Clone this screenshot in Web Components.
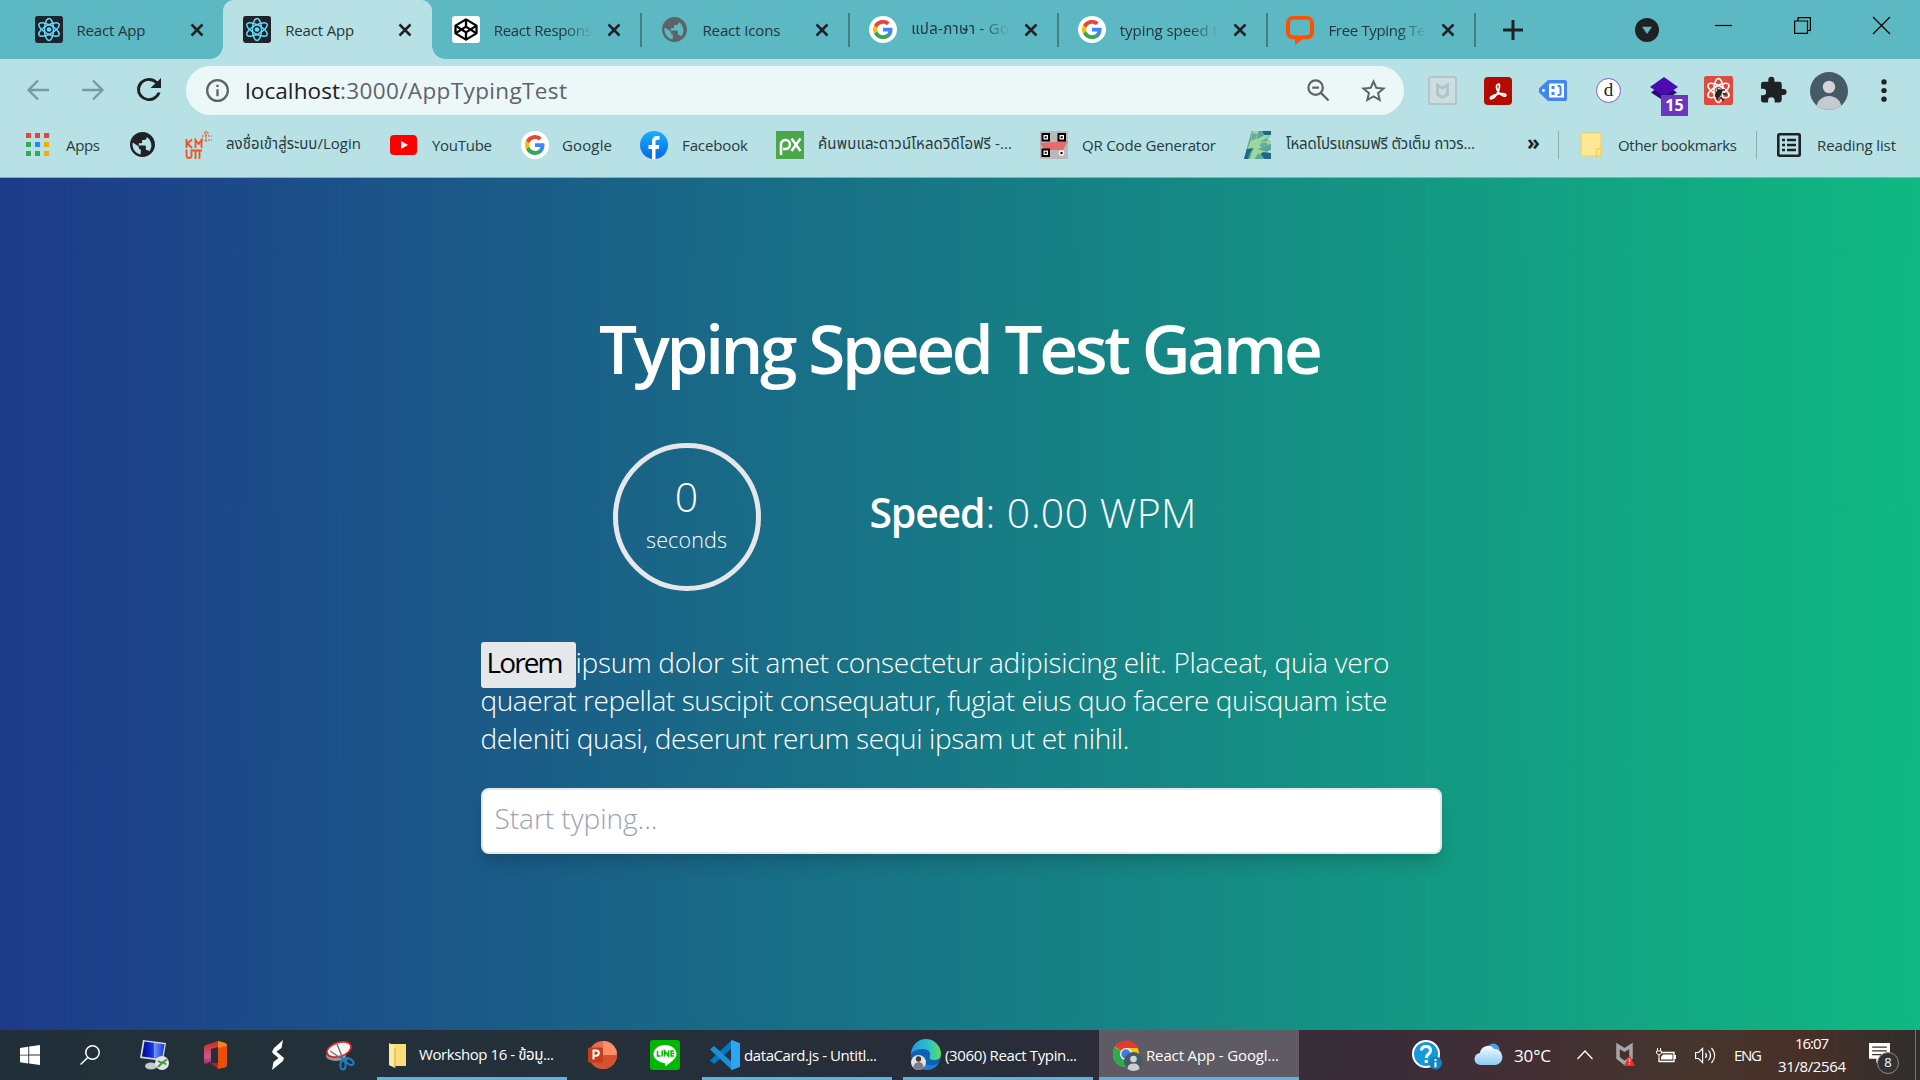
<!DOCTYPE html>
<html lang="th">
<head>
<meta charset="utf-8">
<title>React App</title>
<style>
html,body{margin:0;height:100%;overflow:hidden}
body{font-family:"Open Sans","Noto Sans","Noto Sans Thai",sans-serif;font-size:15px;color:#202124}
</style>
</head>
<body>
<desktop-screen></desktop-screen>
<script>
const G='<circle cx="14" cy="14" r="14" fill="#fff"/><g transform="translate(4 4) scale(.83)"><path fill="#4285f4" d="M23.5 12.3c0-.8-.1-1.6-.2-2.3H12v4.5h6.5a5.500 5.500 0 0 1-2.400 3.600v3h3.900c2.200-2.100 3.500-5.200 3.500-8.800z"/><path fill="#34a853" d="M12 24c3.200 0 6-1.100 8-2.900l-3.900-3c-1.100.7-2.500 1.200-4.100 1.200-3.100 0-5.800-2.100-6.700-5H1.300v3.100A12 12 0 0 0 12 24z"/><path fill="#fbbc05" d="M5.300 14.300a7.200 7.200 0 0 1 0-4.600V6.600h-4a12 12 0 0 0 0 10.800z"/><path fill="#ea4335" d="M12 4.800c1.800 0 3.300.6 4.600 1.800L20 3.200A12 12 0 0 0 1.300 6.600l4 3.100c.9-2.800 3.600-4.900 6.700-4.900z"/></g>';
const GLOBE='<path fill="currentColor" d="M12 2C6.480 2 2 6.480 2 12s4.480 10 10 10 10-4.480 10-10S17.520 2 12 2zM10.500 20c-3.600-.7-6.500-4-6.500-8 0-.6.1-1.200.2-1.700L9 13.500v.8c0 1 .8 1.700 1.700 1.700zm6.900-2.400a1.900 1.900 0 0 0-1.800-1.300h-.9v-2.600c0-.5-.4-.9-.9-.9H9V11h1.800c.5 0 .9-.4.9-.9V8.300h1.800c1 0 1.800-.8 1.800-1.800v-.6a8 8 0 0 1 2.100 11.700z"/>';
const REACT='<g fill="none" stroke="#61dafb" stroke-width="1.500"><ellipse cx="14" cy="14" rx="11.500" ry="4.500" transform="rotate(90 14 14)"/><ellipse cx="14" cy="14" rx="11.500" ry="4.500" transform="rotate(30 14 14)"/><ellipse cx="14" cy="14" rx="11.500" ry="4.500" transform="rotate(150 14 14)"/></g><circle cx="14" cy="14" r="2.300" fill="#61dafb"/>';
const ICONS={
 react:['0 0 28 28','<rect width="28" height="28" rx="2.500" fill="#20232a"/>'+REACT],
 close:['0 0 14 14','<path d="M1.500 1.500l11 11M12.500 1.500l-11 11" stroke="#202124" stroke-width="2.500"/>'],
 codepen:['0 0 28 28','<rect width="28" height="28" rx="3" fill="#fff"/><g fill="none" stroke="#000" stroke-width="2.300" stroke-linejoin="round"><path d="M14 3.500l10.500 6.500v8L14 24.500 3.500 18v-8z"/><path d="M3.500 10L14 17l10.500-7M3.500 18L14 11l10.500 7M14 3.500V11M14 17v7.500"/></g>'],
 globe:['2 2 20 20',GLOBE],
 google:['0 0 28 28',G],
 chat:['0 0 28 28','<path d="M7 2h14a5 5 0 0 1 5 5v11a5 5 0 0 1-5 4h-5l-5 4v-4H7a5 5 0 0 1-5-4V7a5 5 0 0 1 5-5z" fill="none" stroke="#ff5100" stroke-width="4"/>'],
 plus:['0 0 20 20','<path d="M10 0v20M0 10h20" stroke="#202124" stroke-width="3"/>'],
 drop:['0 0 24 24','<circle cx="12" cy="12" r="12" fill="#202124"/><path d="M7 8.800h10L12 16z" fill="#5cb8c2"/>'],
 min:['0 0 17 17','<path d="M0 8.500h17" stroke="#000" stroke-width="1.200"/>'],
 restore:['0 0 17 17','<path d="M.6 4h12.900v12.400H.6zM4 4V.6h12.400v12.900h-3" fill="none" stroke="#000" stroke-width="1.200"/>'],
 wclose:['0 0 17 17','<path d="M0 0l17 17M17 0L0 17" stroke="#000" stroke-width="1.200"/>'],
 back:['0 0 22 22','<path d="M22 11H2M11 1.500L1.500 11l9.500 9.500" fill="none" stroke="#789a9f" stroke-width="2.300"/>'],
 fwd:['0 0 22 22','<path d="M0 11h20M11 1.500l9.500 9.500-9.500 9.500" fill="none" stroke="#789a9f" stroke-width="2.300"/>'],
 reload:['4 4 16 16','<path fill="#202124" d="M17.650 6.350A7.960 7.960 0 0 0 12 4a8 8 0 1 0 7.730 10h-2.080A6 6 0 1 1 12 6c1.660 0 3.140.69 4.220 1.780L13 11h7V4z"/>'],
 info:['2 2 20 20','<path fill="#5f6368" d="M11 17h2v-6h-2zm1-15a10 10 0 1 0 0 20 10 10 0 0 0 0-20zm0 18a8 8 0 1 1 0-16 8 8 0 0 1 0 16zM11 9h2V7h-2z"/>'],
 zoomout:['0 0 24 24','<g fill="none" stroke="#5f6368" stroke-width="2.300"><circle cx="9" cy="9" r="7.500"/><path d="M14.500 14.500l8 8M5.500 9h7"/></g>'],
 star:['2 2 20 19','<path fill="#5f6368" d="M22 9.240l-7.190-.62L12 2 9.190 8.630 2 9.240l5.460 4.730L5.820 21 12 17.270 18.180 21l-1.630-7.030zM12 15.400l-3.760 2.270 1-4.280-3.320-2.880 4.380-.38L12 6.100l1.710 4.040 4.380.38-3.320 2.880 1 4.280z"/>'],
 mcafee:['0 0 29 29','<rect x="1" y="1" width="27" height="27" rx="2" fill="#cbdfe2" stroke="#b2c4c8" stroke-width="2"/><path d="M9.500 9l5 3 5-3v9.500l-5 3-5-3z" fill="none" stroke="#b2c4c8" stroke-width="3"/>'],
 acro:['0 0 28 28','<rect width="28" height="28" rx="4" fill="#b30b00"/><path d="M14 7.200c2.500-1.200 1.700 5.600-1.400 10.300-2.500 4-6.800 5.600-6.200 3.400.7-2.300 8.300-4.400 12-4.200 4.800.5 4.200 3.200.9 2.300-3.100-1-6.900-5.700-6.900-9.300 0-1.400.9-2.200 1.600-2.500z" fill="none" stroke="#fff" stroke-width="1.700"/>'],
 tag:['0 0 28 21','<path d="M9 0h17a2 2 0 0 1 2 2v17a2 2 0 0 1-2 2H9L0 12.500v-4z" fill="#4285f4"/><path d="M10 3.500h15v14H10z" fill="#fff"/><circle cx="4.500" cy="10.500" r="1.400" fill="#fff"/><path d="M12.500 6h3v3h-3zM12.500 12h3v3h-3z" fill="#4285f4"/><path d="M18.500 6h1.500q1.500 0 1.500 1.500v6q0 1.500-1.500 1.500h-1.500" fill="none" stroke="#4285f4" stroke-width="2"/>'],
 layers:['0 0 28 26','<path d="M14 7l13 9-13 9-13-9 4-3z" fill="#2b0a78"/><path d="M14 0l14 10.500L14 20 0 10.500z" fill="#4a0cb0"/>'],
 rdev:['0 0 28 28','<rect width="28" height="28" rx="2" fill="#de4b3c"/>'+REACT.replace(/#61dafb/g,'#fff')+'<g fill="#222" stroke="#222"><ellipse cx="14" cy="17" rx="2.300" ry="4" transform="rotate(30 14 17)"/><path d="M13 12l1 3M17 14l3-1M18 17l4 1M16 20l3 4M12 18l1 5" stroke-width="1.500"/></g>'],
 puzzle:['2 2 20.500 20.500','<path fill="#202124" d="M20.500 11H19V7a2 2 0 0 0-2-2h-4V3.500a2.500 2.500 0 0 0-5 0V5H4a2 2 0 0 0-2 2v3.800h1.500a2.700 2.700 0 0 1 0 5.400H2V20c0 1.100.9 2 2 2h3.800v-1.500a2.700 2.700 0 0 1 5.400 0V22H17a2 2 0 0 0 2-2v-4h1.500a2.500 2.500 0 0 0 0-5z"/>'],
 avatar:['0 0 38 38','<defs><clipPath id="a"><circle cx="19" cy="19" r="19"/></clipPath></defs><g clip-path="url(#a)"><rect width="38" height="38" fill="#455a64"/><circle cx="19" cy="15" r="6.200" fill="#cfd4d9"/><ellipse cx="19" cy="36" rx="12.500" ry="12" fill="#c4cad0"/></g>'],
 dots:['0 0 6 24','<g fill="#202124"><circle cx="3" cy="3" r="2.700"/><circle cx="3" cy="12" r="2.700"/><circle cx="3" cy="21" r="2.700"/></g>'],
 apps:['0 0 23 23','<g><path fill="#ea4335" d="M0 0h5v5H0zM9 0h5v5H9zM18 0h5v5h-5z"/><path fill="#34a853" d="M0 9h5v5H0zM0 18h5v5H0zM9 18h5v5H9z"/><path fill="#1a8cff" d="M9 9h5v5H9z"/><path fill="#f9ab00" d="M18 9h5v5h-5zM18 18h5v5h-5z"/></g>'],
 kmutt:['0 0 27 28','<g fill="none" stroke="#f4511e" stroke-width="1.800"><path d="M1.500 8v9M7 8.500L2.500 12.500 7 17M10.500 17V9l3 4 3-4v8M1.500 18.500v6q0 2.500 2.500 2.500t2.500-2.500v-5h10.500M10.500 20v8M14.500 20v8"/></g><path d="M21 0v12M17 5h10M19 2h6M17 9h10" stroke="#f4511e" stroke-width="1.400" stroke-dasharray="1.400 1.700"/>'],
 yt:['0 0 27 20','<rect width="27" height="20" rx="4" fill="#f00"/><path d="M11 6l7 4-7 4z" fill="#fff"/>'],
 fb:['0 0 28 28','<defs><linearGradient id="f" x2="0" y2="1"><stop stop-color="#19afff"/><stop offset="1" stop-color="#0866e8"/></linearGradient></defs><circle cx="14" cy="14" r="14" fill="url(#f)"/><path d="M12 28V18H8.500v-4H12v-3.500C12 7 14 5 17.300 5c1 0 2.200.2 2.200.2v3.500h-1.800c-1.700 0-2.200 1-2.200 2.200V14h3.900l-.7 4h-3.200v10z" fill="#fff"/>'],
 px:['0 0 28 28','<rect width="28" height="28" fill="#4ba84a"/><g fill="none" stroke="#fff" stroke-width="2.500"><path d="M5 24V12.500A4.500 4.500 0 1 1 9.500 18H7M15.500 7.500L24.500 20M24.500 7.500L15.500 20"/></g>'],
 qr:['0 0 28 28','<rect width="28" height="28" fill="#b9b9b9"/><path d="M0 12l28-2-5 9H5z" fill="#f05a58" opacity=".8"/><g fill="#fff" stroke="#000" stroke-width="2"><rect x="2.500" y="3" width="6.500" height="6.500"/><rect x="18.500" y="3" width="6.500" height="6.500"/><rect x="2.500" y="18.500" width="6.500" height="6.500"/></g><path d="M4.700 5.200h2v2h-2zM20.700 5.200h2v2h-2zM4.700 20.700h2v2h-2z"/><circle cx="21.500" cy="22" r="2" stroke="#fff" stroke-width="1.500"/>'],
 pic:['0 0 28 28','<path d="M8 0h20v5l-4 3 4 3v8l-5 2 5 2v5H0l3-11z" fill="#5aa79a"/><path d="M9 0h6l-2 8 7-3 2-5h6v5L16 11l12-2v4l-14 5 10 3 3 7h-6l-6-6-4 6H6l3-9-6 1 3-8z" fill="#9cd7a0"/><path d="M19 0h9v4h-7zM3 18l7-1-4 5-2 6H0zM20 21l8 1v6h-7l-4-5z" fill="#1d6a88"/><path d="M9 2l5 1-2 5-5 2zM16 13l6-2 4 3-7 4z" fill="#66af9c"/>'],
 folder:['0 0 22 26','<path d="M1 0h18q2 0 2 2v23H1q-1 0-1-1V1q0-1 1-1z" fill="#ffe794" stroke="#f5cf57"/><path d="M17 17h4v8h-5v-6z" fill="#ffe794" stroke="#f5c842"/>'],
 reading:['0 0 24 24','<rect x="1.300" y="1.300" width="21.400" height="21.400" rx="1" fill="none" stroke="#202124" stroke-width="2.600"/><path d="M5 7h3M5 12h3M5 17h3M10 7h9M10 12h9M10 17h9" stroke="#202124" stroke-width="2.400"/>'],
 win:['0 0 20 20','<path fill="#fff" d="M0 3l8.300-1.300v8H0zM9.200 1.500L20 0v9.600H9.200zM0 10.600h8.300v7.900L0 17.200zM9.200 10.600H20V20L9.200 18.600z"/>'],
 search:['0 0 20 20','<g fill="none" stroke="#fff" stroke-width="1.500"><circle cx="12.500" cy="7.500" r="6.700"/><path d="M7.800 12.500L.6 19.500"/></g>'],
 pc:['0 0 29 30','<defs><linearGradient id="p"><stop stop-color="#00068f"/><stop offset=".5" stop-color="#1738e8"/><stop offset=".55" stop-color="#6f93f5"/><stop offset="1" stop-color="#1a35d8"/></linearGradient></defs><ellipse cx="11" cy="26" rx="6" ry="3.500" fill="#c9c9c9"/><path d="M3 0l23 3-3 18L0 18z" fill="#d5d9de"/><path d="M4.500 1.500l20 2.800-2.500 15L2 16.600z" fill="url(#p)"/><circle cx="22" cy="23" r="7" fill="#e4e4e4"/><path d="M18 21l4 2-4 4M27 19.500l-4 2.500 3 2.500" fill="none" stroke="#3a9b3a" stroke-width="1.900"/>'],
 office:['0 0 23 28','<defs><linearGradient id="o" x2="0" y2="1"><stop stop-color="#d12a1c"/><stop offset=".7" stop-color="#c25b8e"/><stop offset="1" stop-color="#b02050"/></linearGradient></defs><path d="M14 0v6L7 8v13L1 23q-1 0-1-2V7q0-2 2-3z" fill="url(#o)"/><path d="M14 0l7 2q2 .6 2 3v19q0 2-2 2.500L14 28z" fill="#e8500a"/><path d="M14 0l7 2q2 .6 2 3l-9 2z" fill="#f58220"/><path d="M6 22h8v6z" fill="#c4152e"/>'],
 ess:['0 0 13 30','<path d="M12 0l-1.500 8L5 12l7 6-1 3-10-9 2-4zM1 30l1.500-8 5-4-6-5 2-3 9.500 8-1 3z" fill="#fff"/>'],
 snip:['0 0 28 29','<ellipse cx="10" cy="15" rx="10" ry="5" fill="#9a9a9a"/><ellipse cx="13" cy="8.500" rx="12.500" ry="7" fill="#f5f5f5" stroke="#d8262c" stroke-width="1.700" transform="rotate(-18 13 8.500)"/><path d="M11 3l6 15M4 10l12 8" stroke="#777" stroke-width="1.500"/><g fill="none" stroke="#1b81c0" stroke-width="2"><ellipse cx="17" cy="24" rx="2.600" ry="4.500"/><ellipse cx="23.500" cy="20.500" rx="4.500" ry="2.600" transform="rotate(35 23.500 20.500)"/><path d="M15 15l3 5 4-2"/></g>'],
 wfolder:['0 0 18 25','<path d="M1 1h16v22H1z" fill="#fbdc78"/><path d="M0 0l6 3v22l-6-3z" fill="#ffe9a2"/><path d="M6 5v20" stroke="#d8a93b"/>'],
 ppt:['0 0 29 28','<circle cx="15" cy="14" r="14" fill="#ed6c47"/><path d="M15 0a14 14 0 0 1 14 14H15z" fill="#ff8f6b"/><path d="M1 14h28a14 14 0 0 1-28 0z" fill="#d35230"/><rect y="6.500" width="15" height="15" rx="1.500" fill="#c43e1c"/><path d="M5.500 18.500v-9h2.700a2.600 2.600 0 0 1 0 5.200H5.500" fill="none" stroke="#fff" stroke-width="2"/>'],
 line:['0 0 30 30','<rect width="30" height="30" rx="3" fill="#00b900"/><path d="M15 5c6.500 0 11.500 4 11.500 9 0 4.500-6 8.500-11.500 12.500.6-2.500.3-3.500-1-3.600C8 22 3.500 18.500 3.500 14c0-5 5-9 11.500-9z" fill="#fff"/><path d="M7.500 11v5h3M12.200 10.500v6M14.500 16.500V11l4 5v-5.500M24 11h-3v5h3M21 13.500h3" fill="none" stroke="#00b900" stroke-width="1.500"/>'],
 vscode:['0 0 30 30','<path d="M22 0v8L4 24l-4-3.500z" fill="#0078c5"/><path d="M0 9.500L4 6l18 16v8z" fill="#1b8fd8"/><path d="M22 0l8 3.300v23.400L22 30l-1-1V1z" fill="#29a7f2"/>'],
 edge:['0 0 30 30','<defs><linearGradient id="e"><stop stop-color="#1f9be0"/><stop offset=".6" stop-color="#2cc3c9"/><stop offset="1" stop-color="#61dc54"/></linearGradient></defs><circle cx="15" cy="15" r="15" fill="#0d62b4"/><path d="M0 14A15 15 0 0 1 30 14q0 6-7 6-6 0-4-4 1-7-7-7Q3 9 0 14z" fill="url(#e)"/><path d="M11 14q-3 8 5 11 6 2 12-2l2-3v9H12z" fill="#262d3b"/><path d="M11 15q-2 8 6 10 5 1 11-2-5 8-14 7-8-3-3-15z" fill="#1b7fca"/><circle cx="7.500" cy="22.500" r="7.500" fill="#dfe3e6"/><circle cx="7.500" cy="19" r="2.700" fill="#49382f"/><path d="M2 28q1-6 6-6 4 0 5 6-5 4-11 0z" fill="#7b7e86"/>'],
 chrome:['0 0 30 31','<circle cx="13" cy="14" r="13" fill="#fbc116"/><path d="M13 14L2 7A13 13 0 0 1 25 8H13z" fill="#e33b2e"/><path d="M13 14L1.700 7.500A13 13 0 0 0 12 27l6-10z" fill="#2da94f"/><circle cx="13" cy="14" r="6" fill="#fff"/><circle cx="13" cy="14" r="4.700" fill="#3e7de8"/><circle cx="20.500" cy="21.500" r="9.500" fill="#455a64"/><circle cx="20.500" cy="19" r="3.300" fill="#d0d5d9"/><path d="M14.500 29q0-5.500 6-5.500t6 5.500q-6 4-12 0z" fill="#c9ced3"/>'],
 help:['0 0 30 31','<circle cx="14" cy="14" r="13" fill="#129bd8" stroke="#fff" stroke-width="2"/><path d="M9.500 10.500q0-4 4.500-4t4.500 4q0 2-2 3.500t-2.300 4M14.200 20v3" fill="none" stroke="#fff" stroke-width="3"/><circle cx="23.500" cy="23" r="6.500" fill="#0f86c4"/><path d="M23.500 19v2M23.500 22.300v5" stroke="#fff" stroke-width="2"/>'],
 cloud:['0 0 27 22','<defs><linearGradient id="c" x2="0" y2="1"><stop stop-color="#f4fbff"/><stop offset="1" stop-color="#8ccbf3"/></linearGradient></defs><circle cx="19" cy="7" r="6.500" fill="#4c9fe0"/><path d="M6 22a6 6 0 0 1-1-12A8.500 8.500 0 0 1 20 6a8 8 0 0 1 1 16z" fill="url(#c)"/>'],
 up:['0 0 16 10','<path d="M.5 9L8 1l7.500 8" fill="none" stroke="#fff" stroke-width="1.300"/>'],
 mc2:['0 0 19 22','<path d="M2 2l6.500 4L15 2v12l-6.500 5L2 14z" fill="none" stroke="#a6a6a8" stroke-width="3.500"/><path d="M13.500 11l5.500 11H8z" fill="#ef2b2d"/><path d="M13.500 14.500v3.500M13.500 19v1.500" stroke="#fff" stroke-width="1.300"/>'],
 batt:['0 0 20 15','<path d="M6 4.500h12v9H3V10" fill="none" stroke="#fff" stroke-width="1.300"/><path d="M7 6.500h9.500v5H5V9zM18 7h2v4h-2z" fill="#fff"/><path d="M1.500 0v3M4.500 0v3M.5 3h5v2l-2 2h-1l-2-2zM3 6v4" stroke="#fff" fill="none"/>'],
 vol:['0 0 21 17','<path d="M.6 5.500h3l4-4v14l-4-4h-3z" fill="none" stroke="#fff" stroke-width="1.200"/><path d="M10.500 6q2 2.500 0 5M13.500 3.500q4 5 0 10M16.500 1q6.500 7.500 0 15" fill="none" stroke="#fff" stroke-width="1.200"/>'],
 note:['0 0 20 19','<path d="M0 0h20v15h-9l-4 4v-4H0z" fill="#fff"/><path d="M3 4h14M3 7.500h14M3 11h9" stroke="#3d302c" stroke-width="1.200"/>']
};
const define=(name,html,setup)=>customElements.define(name,class extends HTMLElement{
  connectedCallback(){
    if(this.shadowRoot)return;
    const t=document.createElement('template');
    t.innerHTML=typeof html==='function'?html(this):html;
    this.attachShadow({mode:'open'}).append(document.importNode(t.content,true));
    if(setup)setup(this);
  }
});

/* One line of text, tracked so that it is exactly w pixels wide. */
define('fit-text','<style>:host{display:inline-block;flex:none;white-space:pre}</style><span><slot></slot></span>',el=>{
  const w=+el.getAttribute('w'),s=el.shadowRoot.querySelector('span');
  if(!w)return;
  el.style.width=w+'px';
  const a=s.getBoundingClientRect().width;
  s.style.letterSpacing='1px';
  const gaps=s.getBoundingClientRect().width-a-1;
  s.style.letterSpacing=gaps>.5?((w-a)/gaps).toFixed(3)+'px':'0';
});

define('app-icon',el=>{
  const [box,art]=ICONS[el.getAttribute('name')];
  return `<style>:host{display:block;flex:none;width:${el.getAttribute('w')}px;height:${el.getAttribute('h')}px}svg{display:block;width:100%;height:100%;overflow:visible}</style><svg viewBox="${box}" preserveAspectRatio="none">${art}</svg>`;
});

define('browser-tab',el=>{
  const g=el.getAttribute('icon')==='globe';
  return `<style>
  :host{display:flex;align-items:center;box-sizing:border-box;width:208.67px;height:59px;flex:none;padding-left:20px;position:relative;color:#23363a}
  :host([active]){background:#b7e1e4;border-radius:11px 11px 0 0}
  :host([active])::before,:host([active])::after{content:"";position:absolute;bottom:0;width:13px;height:13px}
  :host([active])::before{left:-13px;background:radial-gradient(circle at 0 0,transparent 12.500px,#b7e1e4 13px)}
  :host([active])::after{right:-13px;background:radial-gradient(circle at 100% 0,transparent 12.500px,#b7e1e4 13px)}
  .sep{width:2px;height:34px;background:#447f86;margin-left:25px;flex:none}
  .t{width:99px;margin-left:14px;overflow:hidden;flex:none}
  .fade{-webkit-mask-image:linear-gradient(90deg,#000 70%,transparent);mask-image:linear-gradient(90deg,#000 70%,transparent)}
  .i{width:28px;flex:none;color:#5f6368;display:flex;justify-content:center}
  .x{margin-left:14px}
  </style><div class="i"><app-icon name="${el.getAttribute('icon')}" w="${g?25:28}" h="${g?25:27}"></app-icon></div><div class="t ${el.hasAttribute('fade')?'fade':''}"><fit-text w="${el.getAttribute('w')}">${el.getAttribute('label')}</fit-text></div><app-icon class="x" name="close" w="14" h="14"></app-icon>${el.hasAttribute('sep')?'<div class="sep" style="margin-left:19px"></div>':''}`;
});

define('tab-strip',`<style>
:host{display:flex;height:59px;background:#5cb8c2;padding-left:14.500px;align-items:center}
.plus{margin-left:28px}.drop{margin-left:112px}.win{margin-top:-8px}
</style>
<browser-tab icon="react" label="React App" w="69"></browser-tab>
<browser-tab active icon="react" label="React App" w="69"></browser-tab>
<browser-tab sep fade icon="codepen" label="React Respons" w="98"></browser-tab>
<browser-tab sep icon="globe" label="React Icons" w="78"></browser-tab>
<browser-tab sep fade icon="google" label="แปล-ภาษา - Go" w="98"></browser-tab>
<browser-tab sep fade icon="google" label="typing speed t" w="98"></browser-tab>
<browser-tab sep fade icon="chat" label="Free Typing Te" w="97"></browser-tab>
<app-icon class="plus" name="plus" w="20" h="20"></app-icon>
<app-icon class="drop" name="drop" w="24" h="24"></app-icon>
<app-icon class="win" style="margin-left:56px" name="min" w="17" h="17"></app-icon>
<app-icon class="win" style="margin-left:62px" name="restore" w="17" h="17"></app-icon>
<app-icon class="win" style="margin-left:62px" name="wclose" w="17" h="17"></app-icon>`);

define('tool-bar',`<style>
:host{display:flex;height:63px;background:#b7e1e4;align-items:center;box-sizing:border-box;padding-left:27px}
.nav{margin-top:-2px}
.omni{display:flex;align-items:center;box-sizing:border-box;width:1218px;height:49px;border-radius:25px;background:#ecf8f8;margin-left:25px;padding:0 18px 0 20px;font-size:22.500px}
.host{color:#202124;margin-left:16px}.path{color:#5f6368}
.badge{position:absolute;left:11px;top:18px;width:27px;height:21px;background:#6b37bf;color:#fff;font:700 16px/21px "Open Sans",sans-serif;text-align:center}
.d{box-sizing:border-box;width:25px;height:25px;border-radius:50%;background:#fff;border:1px solid #7c5cc4;font:19px/21px "Liberation Serif",serif;text-align:center;margin-left:29px}
.lay{position:relative;margin-left:29px;margin-top:-2px}
</style>
<app-icon class="nav" name="back" w="22" h="22"></app-icon>
<app-icon class="nav" name="fwd" w="22" h="22" style="margin-left:33px"></app-icon>
<app-icon class="nav" name="reload" w="24" h="23" style="margin-left:33px"></app-icon>
<div class="omni"><app-icon name="info" w="23" h="23"></app-icon><fit-text class="host" w="95">localhost</fit-text><fit-text class="path" w="227">:3000/AppTypingTest</fit-text><div style="flex:1"></div><app-icon name="zoomout" w="23" h="23"></app-icon><app-icon name="star" w="25" h="23" style="margin-left:31px"></app-icon></div>
<app-icon name="mcafee" w="29" h="29" style="margin-left:24px"></app-icon>
<app-icon name="acro" w="28" h="28" style="margin-left:27px"></app-icon>
<app-icon name="tag" w="28" h="21" style="margin-left:27px"></app-icon>
<div class="d">d</div>
<div class="lay"><app-icon name="layers" w="28" h="25"></app-icon><div class="badge">15</div></div>
<app-icon name="rdev" w="29" h="29" style="margin-left:26px"></app-icon>
<app-icon name="puzzle" w="25" h="25" style="margin-left:28px"></app-icon>
<app-icon name="avatar" w="38" h="38" style="margin-left:24px"></app-icon>
<app-icon name="dots" w="6" h="23" style="margin-left:33px"></app-icon>`);

define('bookmark-bar',`<style>
:host{display:flex;height:56px;box-sizing:border-box;padding:0 0 10px 26px;background:#b7e1e4;border-bottom:1px solid #86aeb0;align-items:center;color:#263b40}
.r{width:1px;height:28px;background:#8cadb0}
</style>
<app-icon name="apps" w="23" h="23"></app-icon><fit-text w="34" style="margin-left:17px">Apps</fit-text>
<app-icon name="globe" w="25" h="25" style="margin-left:30px;color:#202124"></app-icon>
<app-icon name="kmutt" w="27" h="28" style="margin-left:30px"></app-icon><fit-text w="135" style="margin-left:14px">ลงชื่อเข้าสู่ระบบ/Login</fit-text>
<app-icon name="yt" w="27" h="20" style="margin-left:29px"></app-icon><fit-text w="60" style="margin-left:15px">YouTube</fit-text>
<app-icon name="google" w="28" h="28" style="margin-left:29px"></app-icon><fit-text w="50" style="margin-left:13px">Google</fit-text>
<app-icon name="fb" w="28" h="28" style="margin-left:28px"></app-icon><fit-text w="66" style="margin-left:14px">Facebook</fit-text>
<app-icon name="px" w="28" h="28" style="margin-left:28px"></app-icon><fit-text w="194" style="margin-left:14px">ค้นพบและดาวน์โหลดวิดีโอฟรี -...</fit-text>
<app-icon name="qr" w="28" h="28" style="margin-left:28px"></app-icon><fit-text w="134" style="margin-left:14px">QR Code Generator</fit-text>
<app-icon name="pic" w="27" h="28" style="margin-left:28px"></app-icon><fit-text w="189" style="margin-left:15px">โหลดโปรแกรมฟรี ตัวเต็ม ถาวร...</fit-text>
<fit-text w="12" style="margin:-5px 0 0 52px;font-size:21px;font-weight:700;color:#202124">»</fit-text>
<div class="r" style="margin-left:19px"></div>
<app-icon name="folder" w="21" h="24" style="margin-left:22px"></app-icon><fit-text w="119" style="margin-left:16px">Other bookmarks</fit-text>
<div class="r" style="margin-left:19px"></div>
<app-icon name="reading" w="24" h="24" style="margin-left:20px"></app-icon><fit-text w="79" style="margin-left:16px">Reading list</fit-text>`);

define('timer-ring',`<style>
:host{display:flex;flex-direction:column;align-items:center;box-sizing:border-box;width:148px;height:148px;border:5px solid #e5e7eb;border-radius:50%;padding-top:20px}
.n{font-size:41px;line-height:56px}.s{font-size:21.500px;line-height:31px}
</style><div class="n"><slot></slot></div><fit-text class="s" w="81">seconds</fit-text>`);

define('typing-game',`<style>
:host{display:flex;flex-direction:column;align-items:center;box-sizing:border-box;height:852px;padding:124px 0 0 2px;background:linear-gradient(90deg,#1e3a8a,#10b981);color:#fff;font-weight:300}
.title{font-size:67.500px;line-height:93px;font-weight:600}
.stats{display:flex;width:961px;margin-top:48px;height:148px;padding-left:132px;box-sizing:border-box}
.speed{display:flex;margin:41px 0 0 109px;font-size:41px;line-height:56px}
.speed b{font-weight:600}
.text{display:flex;flex-direction:column;width:961px;margin-top:52px;font-size:28px;line-height:38px}
.row{display:flex}
mark{box-sizing:border-box;width:95px;height:46px;margin:-1px 0 -7px;padding:1px 0 0 6px;border-radius:3px;background:#e5e7eb;color:#000;font-weight:400}
.input{box-sizing:border-box;width:961px;height:66px;margin-top:31px;border:2px solid #e5e7eb;border-radius:8px;background:#fff;color:#9ca3af;padding:9px 12px;font-size:28px;line-height:38px;box-shadow:0 12px 18px -3px rgba(0,0,0,.14),0 5px 7px -2px rgba(0,0,0,.06)}
</style>
<fit-text class="title" w="724">Typing Speed Test Game</fit-text>
<div class="stats"><timer-ring>0</timer-ring><div class="speed"><b><fit-text w="116">Speed</fit-text></b><fit-text w="211">: 0.00 WPM</fit-text></div></div>
<div class="text"><div class="row"><mark><fit-text w="77">Lorem</fit-text></mark><fit-text w="814">ipsum dolor sit amet consectetur adipisicing elit. Placeat, quia vero</fit-text></div>
<div class="row"><fit-text w="907">quaerat repellat suscipit consequatur, fugiat eius quo facere quisquam iste</fit-text></div>
<div class="row"><fit-text w="649">deleniti quasi, deserunt rerum sequi ipsam ut et nihil.</fit-text></div></div>
<div class="input"><fit-text w="163">Start typing...</fit-text></div>`);

define('task-button',`<style>
:host{display:flex;align-items:center;box-sizing:border-box;height:50px;flex:none;border-bottom:3px solid #63b0da;padding-top:3px}
:host([active]){background:#5e5b65}
</style><slot></slot>`);

define('task-bar',`<style>
:host{display:flex;height:50px;align-items:center;color:#fff;font-size:15px;padding-left:20px;background:linear-gradient(90deg,#213038 0,#24303a 30%,#282d3a 52%,#3a2d38 72%,#432f33 80%,#45352c 88%,#483028 94%,#302e2c 100%)}
.clock{display:flex;flex-direction:column;align-items:center;width:70px;margin-left:15px;line-height:23px}
.note{position:relative;margin-left:22px;margin-top:-4px}
.b{position:absolute;left:8px;top:9px;box-sizing:border-box;width:22px;height:22px;border-radius:50%;background:#333;border:1.500px solid #8b8b8b;text-align:center;font-size:13px;line-height:19px}
.end{margin-left:25px;width:1px;height:50px;background:#7b7472}
</style>
<app-icon name="win" w="20" h="20"></app-icon>
<app-icon name="search" w="20" h="20" style="margin-left:40px"></app-icon>
<app-icon name="pc" w="29" h="30" style="margin-left:40px"></app-icon>
<app-icon name="office" w="23" h="28" style="margin-left:35px"></app-icon>
<app-icon name="ess" w="13" h="30" style="margin-left:44px"></app-icon>
<app-icon name="snip" w="28" h="29" style="margin-left:42px"></app-icon>
<task-button style="margin-left:23px;width:190px"><app-icon name="wfolder" w="18" h="25" style="margin-left:12px"></app-icon><fit-text w="135" style="margin-left:12px">Workshop 16 - ข้อมู...</fit-text></task-button>
<app-icon name="ppt" w="29" h="28" style="margin-left:21px"></app-icon>
<app-icon name="line" w="30" h="30" style="margin-left:33px"></app-icon>
<task-button style="margin-left:22px;width:190px"><app-icon name="vscode" w="30" h="30" style="margin-left:8px"></app-icon><fit-text w="133" style="margin-left:4px">dataCard.js - Untitl...</fit-text></task-button>
<task-button style="margin-left:11px;width:190px"><app-icon name="edge" w="30" h="30" style="margin-left:8px"></app-icon><fit-text w="132" style="margin-left:4px">(3060) React Typin...</fit-text></task-button>
<task-button active style="margin-left:6px;width:200px"><app-icon name="chrome" w="30" h="31" style="margin-left:14px"></app-icon><fit-text w="133" style="margin-left:3px">React App - Googl...</fit-text></task-button>
<app-icon name="help" w="30" h="31" style="margin-left:113px"></app-icon>
<app-icon name="cloud" w="26" h="22" style="margin:-3px 0 0 33px"></app-icon>
<fit-text w="37" style="margin-left:13px;font-size:17px">30°C</fit-text>
<app-icon name="up" w="16" h="10" style="margin-left:26px"></app-icon>
<app-icon name="mc2" w="19" h="22" style="margin-left:23px"></app-icon>
<app-icon name="batt" w="20" h="15" style="margin-left:21px"></app-icon>
<app-icon name="vol" w="21" h="17" style="margin-left:19px"></app-icon>
<fit-text w="28" style="margin-left:18px">ENG</fit-text>
<div class="clock"><fit-text w="34">16:07</fit-text><fit-text w="68">31/8/2564</fit-text></div>
<div class="note"><app-icon name="note" w="21" h="20"></app-icon><div class="b">8</div></div>
<div class="end"></div>`);

define('desktop-screen',`<style>:host{display:flex;flex-direction:column;width:1920px;height:1080px;overflow:hidden}</style>
<tab-strip></tab-strip><tool-bar></tool-bar><bookmark-bar></bookmark-bar><typing-game></typing-game><task-bar></task-bar>`);
</script>
</body>
</html>
